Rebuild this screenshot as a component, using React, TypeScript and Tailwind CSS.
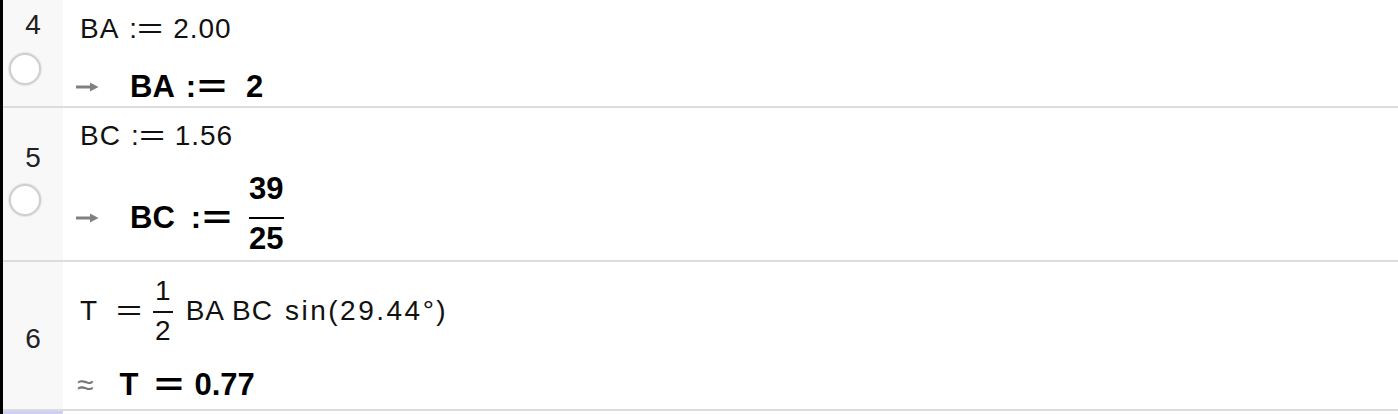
import React from 'react';

const sans = "font-['Liberation_Sans',Arial,sans-serif]";

function Circle({ className = '' }: { className?: string }) {
  return (
    <div
      className={`ml-[6px] h-8 w-8 rounded-full border-2 border-[#cfcfcf] bg-white shadow-[0_0_1px_1px_rgba(0,0,0,0.08)] ${className}`}
    />
  );
}

function Arrow() {
  return (
    <svg width="24" height="12" viewBox="0 0 24 12" className="shrink-0">
      <path d="M1 6 H17" stroke="#808080" strokeWidth="3" />
      <path d="M15 1.5 L23.5 6 L15 10.5 Z" fill="#808080" />
    </svg>
  );
}

// wide TeX-style equals
function Eq({ bold = false }: { bold?: boolean }) {
  return (
    <span
      className={`inline-block text-center ${
        bold ? 'w-[32px] scale-x-[1.6] font-bold' : 'w-[26px] scale-x-[1.6]'
      }`}
    >
      =
    </span>
  );
}

function Frac({ num, den, bold = false }: { num: string; den: string; bold?: boolean }) {
  return (
    <span className="inline-flex flex-col items-center">
      <span className={bold ? 'font-bold' : 'px-[2px]'}>{num}</span>
      <span className={`w-full ${bold ? 'mt-[14px] h-[2px] bg-black' : 'mt-[6px] h-[2px] bg-[#111]'}`} />
      <span className={`${bold ? 'mt-[6px] font-bold' : 'mt-[4px]'}`}>{den}</span>
    </span>
  );
}

export default function App() {
  return (
    <div className={`h-[414px] w-[1398px] overflow-hidden border-l-[3px] border-black bg-white text-[28px] leading-[28px] text-[#111] ${sans}`}>
      {/* row 4 */}
      <div className="flex h-[108px] border-b-2 border-[#dcdcdc]">
        <div className="flex w-[60px] shrink-0 flex-col bg-[#f8f8f8]">
          <div className="pt-[11px] text-center text-[#222]">4</div>
          <Circle className="mt-[14px]" />
        </div>
        <div className="flex flex-1 flex-col pl-[12px]">
          <div className="ml-[5px] mt-[15px] flex tracking-[1px]">
            <span>BA</span>
            <span className="ml-[10px]">:</span>
            <Eq />
            <span className="ml-[9px]">2.00</span>
          </div>
          <div className="mt-[30px] flex items-center text-[31px] font-bold text-black">
            <Arrow />
            <span className="ml-[31px]">BA</span>
            <span className="ml-[11px]">:</span>
            <Eq bold />
            <span className="ml-[18px]">2</span>
          </div>
        </div>
      </div>

      {/* row 5 */}
      <div className="flex h-[154px] border-b-2 border-[#dcdcdc]">
        <div className="flex w-[60px] shrink-0 flex-col bg-[#f8f8f8]">
          <div className="pt-[36px] text-center text-[#222]">5</div>
          <Circle className="mt-[12px]" />
        </div>
        <div className="flex flex-1 flex-col pl-[12px]">
          <div className="ml-[5px] mt-[14px] flex tracking-[1px]">
            <span>BC</span>
            <span className="ml-[10px]">:</span>
            <Eq />
            <span className="ml-[9px]">1.56</span>
          </div>
          <div className="mt-[25px] flex items-start text-[31px] font-bold text-black">
            <span className="mt-[37px]">
              <Arrow />
            </span>
            <span className="ml-[31px] mt-[29px]">BC</span>
            <span className="ml-[16px] mt-[29px]">:</span>
            <span className="mt-[29px]">
              <Eq bold />
            </span>
            <span className="ml-[16px]">
              <Frac num="39" den="25" bold />
            </span>
          </div>
        </div>
      </div>

      {/* row 6 */}
      <div className="flex h-[149px] border-b-2 border-[#dcdcdc]">
        <div className="flex w-[60px] shrink-0 flex-col bg-[#f8f8f8]">
          <div className="pt-[63px] text-center text-[#222]">6</div>
        </div>
        <div className="flex flex-1 flex-col pl-[12px]">
          <div className="ml-[5px] mt-[15px] flex items-center">
            <span>T</span>
            <span className="ml-[19px]">
              <Eq />
            </span>
            <span className="ml-[11px]">
              <Frac num="1" den="2" />
            </span>
            <span className="ml-[13px] tracking-[1px]">BA</span>
            <span className="ml-[7px] tracking-[1px]">BC</span>
            <span className="ml-[12px] tracking-[2.5px]">sin(29.44°)</span>
          </div>
          <div className="mt-[26px] flex items-center text-[31px] font-bold text-black">
            <span className="ml-[2px] text-[30px] font-normal text-[#777]">≈</span>
            <span className="ml-[26px]">T</span>
            <span className="ml-[15px]">
              <Eq bold />
            </span>
            <span className="ml-[9px]">0.77</span>
          </div>
        </div>
      </div>

      {/* next (selected) row */}
      <div className="flex h-[5px]">
        <div className="w-[60px] shrink-0 bg-[#cfcff8]" />
        <div className="flex-1" />
      </div>
    </div>
  );
}
